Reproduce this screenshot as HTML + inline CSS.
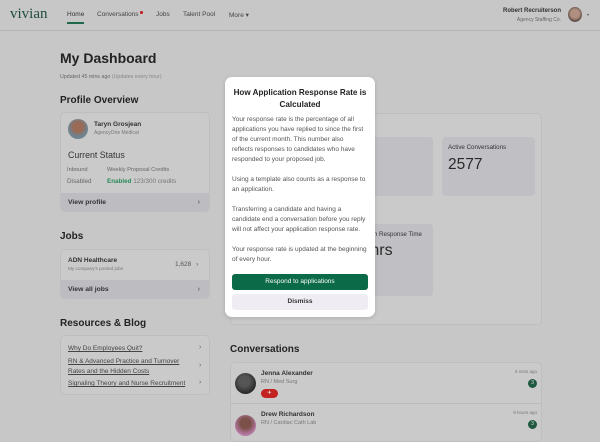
<!DOCTYPE html>
<html><head><meta charset="utf-8"><style>
*{margin:0;padding:0;box-sizing:border-box}
body{width:600px;height:429px;overflow:hidden;background:#c7c7c7;font-family:"Liberation Sans",sans-serif;color:#2a2a2a;position:relative}
.a{position:absolute;white-space:nowrap}
.card{position:absolute;background:#cacaca;border:1px solid #bebebe;border-radius:5px;overflow:hidden}
.foot{position:absolute;left:0;right:0;background:#bdbcc1;font-size:6.8px;font-weight:bold;padding-left:7px;color:#333}
.chev{position:absolute;right:9px;color:#666;font-size:7px}
.lnk{text-decoration:underline;color:#444;font-size:6.5px}
.box{position:absolute;background:#c0bfc4;border-radius:4px}
</style></head><body>
<div class="a" style="left:0;top:30px;width:600px;height:1px;background:#b3b3b3"></div>
<div class="a" style="left:10px;top:6px;font-family:'Liberation Serif',serif;font-size:15px;color:#1f4d3a">vivian</div>
<div class="a" style="left:67px;top:11px;font-size:6.5px;color:#333">Home</div>
<div class="a" style="left:67px;top:22px;width:17px;height:1.5px;background:#1f6a4a"></div>
<div class="a" style="left:97px;top:11px;font-size:6.5px;color:#444">Conversations</div>
<div class="a" style="left:140px;top:11px;width:2.5px;height:2.5px;border-radius:50%;background:#c02020"></div>
<div class="a" style="left:156px;top:11px;font-size:6.5px;color:#444">Jobs</div>
<div class="a" style="left:183px;top:11px;font-size:6.5px;color:#444">Talent Pool</div>
<div class="a" style="left:229px;top:11px;font-size:6.5px;color:#444">More ▾</div>
<div class="a" style="right:39px;top:8px;font-size:6px;font-weight:bold;color:#333">Robert Recruiterson</div>
<div class="a" style="right:39px;top:17px;font-size:5px;color:#666">Agency Staffing Co.</div>
<div class="a" style="left:568px;top:7px;width:14px;height:15px;border-radius:50%;background:radial-gradient(circle at 50% 45%,#b08f80 40%,#5a4a44 70%)"></div>
<div class="a" style="left:587px;top:12px;font-size:4px;color:#555">▾</div>

<div class="a" style="left:60px;top:50px;font-size:14px;font-weight:bold;color:#222">My Dashboard</div>
<div class="a" style="left:60px;top:74px;font-size:5.3px;color:#666">Updated 45 mins ago <span style="color:#888">(Updates every hour)</span></div>
<div class="a" style="left:60px;top:95px;font-size:10px;font-weight:bold;color:#222">Profile Overview</div>

<div class="card" style="left:60px;top:112px;width:150px;height:100px">
 <div class="a" style="left:7px;top:6px;width:20px;height:20px;border-radius:50%;background:radial-gradient(circle at 50% 40%,#9a6a55 30%,#6f8390 60%)"></div>
 <div class="a" style="left:33px;top:8px;font-size:6.5px;font-weight:bold;color:#333">Taryn Grosjean</div>
 <div class="a" style="left:33px;top:17px;font-size:5px;color:#777">AgencyOne Medical</div>
 <div class="a" style="left:7px;top:37px;font-size:8.8px;color:#333">Current Status</div>
 <div class="a" style="left:6px;top:54px;font-size:5.7px;color:#666">Inbound</div>
 <div class="a" style="left:46px;top:54px;font-size:5.7px;color:#666">Weekly Proposal Credits</div>
 <div class="a" style="left:6px;top:65px;font-size:6.3px;color:#666">Disabled</div>
 <div class="a" style="left:46px;top:65px;font-size:6.3px;color:#777"><b style="color:#2a8a5a">Enabled</b> 123/300 credits</div>
 <div class="foot" style="top:80px;height:20px;line-height:20px">View profile<span class="chev">›</span></div>
</div>

<div class="a" style="left:60px;top:231px;font-size:10px;font-weight:bold;color:#222">Jobs</div>
<div class="card" style="left:60px;top:249px;width:150px;height:50px">
 <div class="a" style="left:7px;top:7px;font-size:6.5px;font-weight:bold;color:#333">ADN Healthcare</div>
 <div class="a" style="left:7px;top:16px;font-size:4.7px;color:#777">My company's posted jobs</div>
 <div class="a" style="left:114px;top:11px;font-size:6.5px;color:#555">1,628 <span style="margin-left:3px">›</span></div>
 <div class="foot" style="top:30px;height:20px;line-height:20px">View all jobs<span class="chev">›</span></div>
</div>

<div class="a" style="left:60px;top:318px;font-size:10px;font-weight:bold;color:#222">Resources &amp; Blog</div>
<div class="card" style="left:60px;top:335px;width:150px;height:60px">
 <div class="a lnk" style="left:7px;top:9px">Why Do Employees Quit?</div>
 <div class="a lnk" style="left:7px;top:21px;line-height:10px">RN &amp; Advanced Practice and Turnover<br>Rates and the Hidden Costs</div>
 <div class="a lnk" style="left:7px;top:44px">Signaling Theory and Nurse Recruitment</div>
 <div class="a" style="left:138px;top:8px;font-size:7px;color:#666">›</div>
 <div class="a" style="left:138px;top:26px;font-size:7px;color:#666">›</div>
 <div class="a" style="left:138px;top:43px;font-size:7px;color:#666">›</div>
</div>

<div class="card" style="left:230px;top:113px;width:312px;height:212px">
 <div class="box" style="left:10px;top:23px;width:192px;height:59px"></div>
 <div class="box" style="left:211px;top:23px;width:93px;height:59px"></div>
 <div class="a" style="left:217px;top:30px;font-size:6.2px;color:#333">Active Conversations</div>
 <div class="a" style="left:217px;top:42px;font-size:15.5px;color:#2a2a2a">2577</div>
 <div class="box" style="left:10px;top:110px;width:192px;height:72px"></div>
 <div class="a" style="left:126px;top:117px;font-size:6.2px;color:#333">Median Response Time</div>
 <div class="a" style="left:126px;top:128px;font-size:16px;color:#2a2a2a">2 hrs</div>
</div>

<div class="a" style="left:230px;top:344px;font-size:10px;font-weight:bold;color:#222">Conversations</div>
<div class="card" style="left:230px;top:362px;width:312px;height:80px">
 <div class="a" style="left:4px;top:10px;width:21px;height:21px;border-radius:50%;background:radial-gradient(circle at 45% 40%,#555 30%,#2a2a2a 70%)"></div>
 <div class="a" style="left:30px;top:7px;font-size:6.5px;font-weight:bold;color:#333">Jenna Alexander</div>
 <div class="a" style="left:30px;top:16px;font-size:5.5px;color:#777">RN / Med Surg</div>
 <div class="a" style="left:30px;top:26px;width:17px;height:9px;border-radius:5px;background:#c22222;color:#fff;font-size:5px;text-align:center;line-height:9px">✈</div>
 <div class="a" style="right:4px;top:6px;font-size:4.5px;color:#777">5 mins ago</div>
 <div class="a" style="right:4px;top:16px;width:9px;height:9px;border-radius:50%;background:#1f5a40;color:#ddd;font-size:5px;text-align:center;line-height:9px">3</div>
 <div class="a" style="left:0;top:40px;width:312px;height:1px;background:#bcbcbc"></div>
 <div class="a" style="left:4px;top:52px;width:21px;height:21px;border-radius:50%;background:radial-gradient(circle at 50% 40%,#7a5048 30%,#b87aa8 70%)"></div>
 <div class="a" style="left:30px;top:48px;font-size:6.5px;font-weight:bold;color:#333">Drew Richardson</div>
 <div class="a" style="left:30px;top:57px;font-size:5.5px;color:#777">RN / Cardiac Cath Lab</div>
 <div class="a" style="right:4px;top:47px;font-size:4.5px;color:#777">9 hours ago</div>
 <div class="a" style="right:4px;top:57px;width:9px;height:9px;border-radius:50%;background:#1f5a40;color:#ddd;font-size:5px;text-align:center;line-height:9px">3</div>
</div>

<div class="a" style="left:225px;top:77px;width:150px;height:240px;background:#fff;border-radius:7px;box-shadow:0 1px 4px rgba(0,0,0,.15)">
 <div class="a" style="left:0;width:150px;top:10px;text-align:center;font-size:8.1px;font-weight:bold;line-height:11.5px;color:#222">How Application Response Rate is<br>Calculated</div>
 <div class="a" style="left:7px;top:38px;font-size:6.5px;line-height:10px;color:#555">Your response rate is the percentage of all<br>applications you have replied to since the first<br>of the current month. This number also<br>reflects responses to candidates who have<br>responded to your proposed job.<br><br>Using a template also counts as a response to<br>an application.<br><br>Transferring a candidate and having a<br>candidate end a conversation before you reply<br>will not affect your application response rate.<br><br>Your response rate is updated at the beginning<br>of every hour.</div>
 <div class="a" style="left:7px;top:197px;width:136px;height:16px;background:#0b6a47;border-radius:3px;color:#fff;font-size:6.5px;text-align:center;line-height:16px">Respond to applications</div>
 <div class="a" style="left:7px;top:217px;width:136px;height:16px;background:#efedf3;border-radius:3px;color:#333;font-size:6.5px;font-weight:bold;text-align:center;line-height:16px">Dismiss</div>
</div>
</body></html>
